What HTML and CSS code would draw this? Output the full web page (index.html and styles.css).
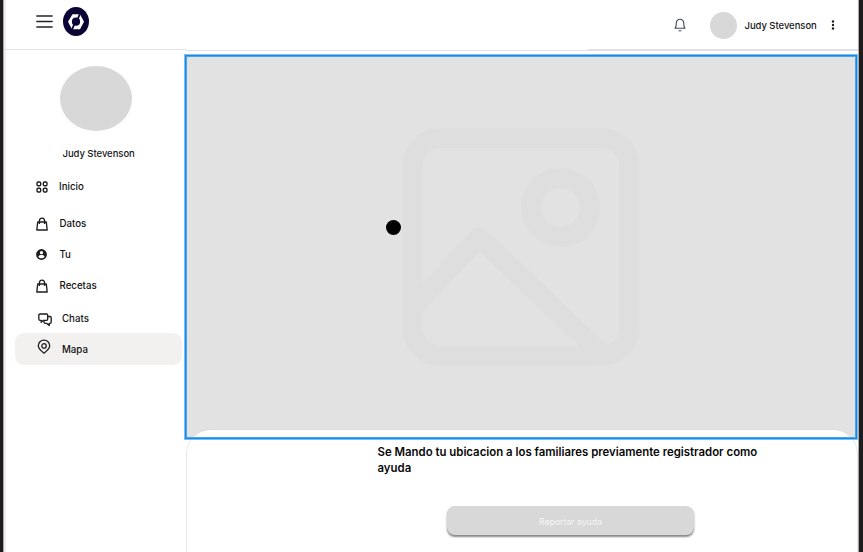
FILE: index.html
```html
<!DOCTYPE html>
<html lang="es">
<head>
<meta charset="utf-8">
<title>Mapa</title>
<link rel="stylesheet" href="styles.css">
</head>
<body>
<div class="app">
  <header class="topbar">
    <div class="brand">
      <svg class="burger" width="17" height="14" viewBox="0 0 17 14" fill="none" stroke="#252528" stroke-width="1.3" stroke-linecap="round"><path d="M.8 2h15.4M.8 7.500h15.4M.8 13h15.4"/></svg>
      <svg class="logo" width="26" height="30" viewBox="0 0 26 30"><ellipse cx="13" cy="14.6" rx="13" ry="14.5" fill="#0d0436"/><path d="M9.500 7.200h7.500l4 7.500-4 7.500H9L5 14.700z" fill="#fff"/><circle cx="13" cy="14.700" r="4.1" fill="#0d0436"/><path d="M17.200 6.200 14.500 12.700M11.500 16.700 8.800 23.200" stroke="#0d0436" stroke-width="1.8"/></svg>
    </div>
    <div class="account">
      <svg class="bell" width="12" height="14" viewBox="0 0 12 14" fill="none" stroke="#3c4a5b" stroke-width="1.1" stroke-linecap="round" stroke-linejoin="round"><path d="M1 10.2c1-.9 1.3-2 1.3-5A3.7 3.7 0 0 1 6 1.3a3.7 3.7 0 0 1 3.7 3.9c0 3 .3 4.1 1.3 5zM5 12.8h2"/></svg>
      <span class="face"></span>
      <span class="name">Judy Stevenson</span>
      <svg class="dots" width="4" height="10" viewBox="0 0 4 10" fill="#1b1b1f"><circle cx="2" cy="1.5" r="1.2"/><circle cx="2" cy="5" r="1.2"/><circle cx="2" cy="8.5" r="1.2"/></svg>
    </div>
  </header>
  <div class="body">
    <aside class="sidebar">
      <div class="portrait"></div>
      <div class="username">Judy Stevenson</div>
      <nav class="menu">
        <a class="item item-first"><svg width="12" height="12" viewBox="0 0 12 12" fill="none" stroke="#1e1e20" stroke-width="1.4"><rect x="1" y="1" width="3.7" height="3.7" rx="1.2"/><rect x="7.3" y="1" width="3.7" height="3.7" rx="1.2"/><rect x="1" y="7.3" width="3.7" height="3.7" rx="1.2"/><rect x="7.3" y="7.3" width="3.7" height="3.7" rx="1.2"/></svg><span>Inicio</span></a>
        <a class="item bag"><svg width="12" height="14" viewBox="0 0 12 14" fill="none" stroke="#1e1e20" stroke-width="1.35" stroke-linejoin="round"><path d="M1.700 5h8.600l.9 8H.8zM3.400 7V4a2.600 2.900 0 0 1 5.200 0v3"/></svg><span>Datos</span></a>
        <a class="item"><svg class="user" width="11" height="11" viewBox="0 0 11 11"><circle cx="5.500" cy="5.500" r="5.400" fill="#1e1e20"/><circle cx="5.500" cy="3.700" r="1.650" fill="#fff"/><path d="M2.300 7.700c.8-1.300 2-1.600 3.200-1.600s2.400.3 3.200 1.600c-.8 1-2 1.500-3.200 1.500s-2.400-.5-3.200-1.500z" fill="#fff"/></svg><span>Tu</span></a>
        <a class="item bag"><svg width="12" height="14" viewBox="0 0 12 14" fill="none" stroke="#1e1e20" stroke-width="1.35" stroke-linejoin="round"><path d="M1.700 5h8.600l.9 8H.8zM3.400 7V4a2.600 2.900 0 0 1 5.200 0v3"/></svg><span>Recetas</span></a>
        <a class="item item-chats"><svg width="14" height="14" viewBox="0 0 14 14" fill="none" stroke="#1e1e20" stroke-width="1.35" stroke-linejoin="round"><path d="M2 1h6.500q1.200 0 1.200 1.200v3.900q0 1.200-1.200 1.200H5.300L3.200 9.200V7.300H2Q.8 7.300.8 6.100V2.200Q.8 1 2 1z"/><path d="M9.700 3.500H12q1.200 0 1.200 1.200v4.400q0 1.200-1.200 1.200h-.8v2.300l-2.600-2.300H7.200Q6 10.300 6 9.100V7.300"/></svg><span>Chats</span></a>
        <a class="item item-active"><svg width="14" height="16" viewBox="0 0 14 16" fill="none" stroke="#1e1e20" stroke-width="1.3" stroke-linejoin="round"><path d="M7 14.200C3.500 11.500 1.300 9.400 1.300 6.800a5.700 5.700 0 0 1 11.400 0c0 2.600-2.200 4.700-5.700 7.400z"/><circle cx="7" cy="6.900" r="2.200"/></svg><span>Mapa</span></a>
      </nav>
    </aside>
    <main class="content">
      <div class="rule"></div>
      <div class="map">
        <svg class="placeholder" width="238" height="240" viewBox="0 0 238 240" fill="none" stroke="#dedede" stroke-width="20" stroke-linejoin="round"><rect x="10.5" y="10" width="217" height="218" rx="28"/><circle cx="158.500" cy="79.500" r="29.500"/><path d="M11 180 77 109 201 227"/></svg>
        <span class="marker"></span>
      </div>
      <section class="sheet">
        <p class="notice">Se Mando tu ubicacion a los familiares previamente registrador como<br>ayuda</p>
        <button class="report">Reportar ayuda</button>
      </section>
    </main>
  </div>
</div>
</body>
</html>
```
FILE: styles.css
```css
* { box-sizing: border-box; }
body {
  margin: 0;
  background: #1e1c1d;
  font-family: Inter, "Liberation Sans", sans-serif;
  color: #17171a;
}
.app {
  height: 552px;
  margin: 0 4px 0 3px;
  background: #fff;
  border-left: 1px solid #aaa;
  border-right: 1px solid #aaa;
  overflow: hidden;
  display: flex;
  flex-direction: column;
  box-shadow: inset 2px 0 #efefef;
}
.topbar {
  flex: none;
  height: 49px;
  margin-left: 1px;
  display: flex;
  justify-content: space-between;
}
.brand { display: flex; align-items: flex-start; padding: 7px 0 0 31px; }
.burger { margin-top: 7px; }
.logo { margin-left: 10px; }
.account { display: flex; align-items: center; padding: 1px 23px 0 0; font-size: 9.5px; font-weight: 500; }
.face { width: 27px; height: 27px; border-radius: 50%; background: #d8d8d8; margin: 0 7.5px 0 24px; }
.name { width: 72px; white-space: nowrap; letter-spacing: -.05px; }
.dots { margin-left: 14.5px; }
.body { flex: 1; min-height: 0; display: flex; }
.sidebar { width: 183px; flex: none; padding: 16px 5px 0 11px; border-top: 1px solid #e1e1e1; }
.portrait { width: 72px; height: 65px; margin-left: 44.5px; border-radius: 50%; background: #d8d8d8; }
.username { margin: 16px 0 11px 47.5px; font-size: 9.5px; line-height: 14px; letter-spacing: -.05px; font-weight: 450; white-space: nowrap; }
.menu { display: flex; flex-direction: column; font-size: 9.7px; font-weight: 500; color: #111; }
.item { height: 31px; padding-left: 21px; display: flex; align-items: center; gap: 11.5px; }
.item span { position: relative; top: 1px; }
.item-first { height: 29px; margin-bottom: 6px; gap: 11px; }
.item-first span, .item-active span { top: .3px; }
.bag svg { position: relative; top: 1.5px; }
.user { margin-right: 1px; }
.item svg.user { position: relative; top: .5px; }
.item-chats { height: 31px; margin-top: 2px; padding-left: 23px; gap: 10px; }
.item-chats svg { position: relative; top: 2px; }
.item-active { height: 32px; padding-left: 22px; gap: 11px; background: #f2f1f0; border-radius: 9px; }
.item-active svg { position: relative; top: -2px; }
.content { flex: 1; min-width: 0; }
.rule {
  height: 2px;
  margin: 0 0 3px;
  border-bottom: 1px solid #e0e0e0;
  background: linear-gradient(#e0e0e0, #e0e0e0) 100% 0 / 270px 1px no-repeat;
}
.map {
  position: relative;
  height: 386px;
  margin: 0 0 0 -3px;
  background: #e2e2e2;
}
.map::after {
  content: "";
  position: absolute;
  inset: 0;
  z-index: 2;
  border: 1px solid #7cc0f3;
  outline: 1px solid #128ce8;
  outline-offset: -2px;
  box-shadow: inset 0 0 0 2px #46a5ee;
}
.placeholder { position: absolute; left: 218px; top: 74px; }
.marker { position: absolute; left: 201.5px; top: 165.5px; width: 15px; height: 15px; border-radius: 50%; background: #000; }
.sheet {
  position: relative;
  z-index: 1;
  height: 150px;
  margin: -11px 0 0 -1px;
  padding: 14px 0 0 190.5px;
  background: #fff;
  border-left: 1px solid #e8e8e8;
  border-top: 1px solid #ddd;
  border-right: 1px solid #e8e8e8;
  border-radius: 25px 25px 0 0;
}
.notice { margin: 0; font-size: 11.4px; line-height: 16px; font-weight: 600; color: #080808; white-space: nowrap; }
.report {
  display: block;
  width: 247px;
  height: 29px;
  margin: 30px 0 0 69.5px;
  padding: 3px 0 0;
  border: 0;
  border-radius: 8px;
  background: #d8d8d8;
  box-shadow: 0 2px 2px #888;
  color: #f5f5f5;
  font: 400 8.7px Inter, "Liberation Sans", sans-serif;
}
```
